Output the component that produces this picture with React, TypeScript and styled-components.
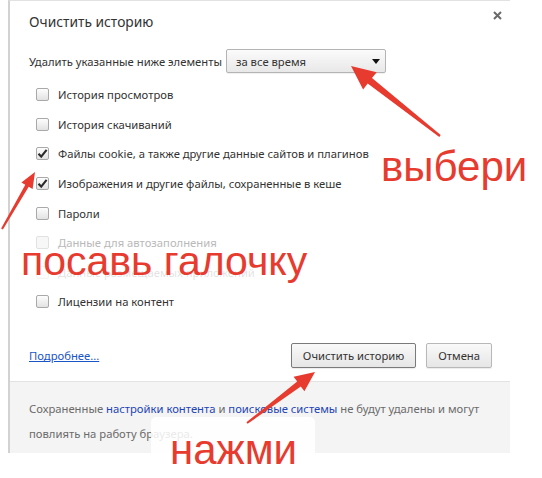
import React from "react";
import styled, { createGlobalStyle, css } from "styled-components";

const Global = createGlobalStyle`
  html, body { margin: 0; padding: 0; background: #ffffff; }
  body { font-family: "Noto Sans", "Open Sans", Arial, sans-serif; }
`;

const Page = styled.div`
  position: relative;
  width: 542px;
  height: 478px;
  overflow: hidden;
  background: #ffffff;
`;

const Dialog = styled.div`
  margin-left: 8px;
  width: 500px;
  border-left: 2px solid #d2d2d2;
  border-top: 1px solid #e2e2e2;
  background: #ffffff;
  font-family: "Noto Sans", "Open Sans", Arial, sans-serif;
  font-size: 11.25px;
  color: #333333;
`;

const Header = styled.div`
  display: flex;
  justify-content: space-between;
  align-items: flex-start;
  padding: 11px 8px 0 19px;
`;

const Title = styled.div`
  font-size: 13.8px;
  line-height: 20px;
  color: #333333;
`;

const Close = styled.div`
  width: 10px;
  height: 10px;
  margin-top: -2px;
  display: flex;
  align-items: center;
  justify-content: center;
`;

const Content = styled.div`
  padding: 0 18px 0 19px;
`;

const PeriodRow = styled.div`
  display: flex;
  align-items: center;
  gap: 4px;
  margin-top: 17px;
  height: 24px;
`;

const Select = styled.div`
  position: relative;
  box-sizing: border-box;
  width: 160px;
  height: 24px;
  padding-left: 9px;
  display: flex;
  align-items: center;
  border: 1px solid #b4b4b4;
  border-radius: 2px;
  background: linear-gradient(#fbfbfb, #e8e8e8);
  box-shadow: 0 1px 0 rgba(0, 0, 0, 0.06);
  color: #333333;
`;

const Caret = styled.span`
  position: absolute;
  right: 5px;
  top: 9px;
  width: 0;
  height: 0;
  border-left: 4px solid transparent;
  border-right: 4px solid transparent;
  border-top: 5px solid #111111;
`;

const List = styled.div`
  margin-top: 7px;
  display: flex;
  flex-direction: column;
`;

const Row = styled.div<{ $disabled?: boolean }>`
  height: 29.6px;
  display: flex;
  align-items: center;
  gap: 9px;
  padding-left: 7px;
  color: ${(p) => (p.$disabled ? "#b9b9b9" : "#333333")};
`;

const Box = styled.span<{ $disabled?: boolean }>`
  box-sizing: border-box;
  width: 13px;
  height: 13px;
  border-radius: 2px;
  display: flex;
  align-items: center;
  justify-content: center;
  ${(p) =>
    p.$disabled
      ? css`
          border: 1px solid #e1e1e1;
          background: #f7f7f7;
        `
      : css`
          border: 1px solid #a9a9a9;
          background: linear-gradient(#fdfdfd, #e2e2e2);
        `}
`;

const Actions = styled.div`
  margin-top: 26px;
  display: flex;
  align-items: center;
  justify-content: space-between;
  height: 25px;
  margin-bottom: 13px;
`;

const MoreLink = styled.a`
  color: #1a55c8;
  text-decoration: underline;
  margin-top: 1px;
`;

const Buttons = styled.div`
  display: flex;
  gap: 10px;
`;

const Button = styled.div<{ $primary?: boolean }>`
  box-sizing: border-box;
  height: 25px;
  padding: 0 11px;
  display: flex;
  align-items: center;
  border-radius: 2px;
  border: 1px solid ${(p) => (p.$primary ? "#7a7a7a" : "#b8b8b8")};
  background: linear-gradient(#f9f9f9, #e6e6e6);
  box-shadow: 0 1px 1px rgba(0, 0, 0, 0.08);
  color: #333333;
`;

const Footer = styled.div`
  border-top: 1px solid #e3e3e3;
  background: #f4f4f4;
  padding: 14px 19px 7px 19px;
  line-height: 25px;
  color: #6b6b6b;
`;

const FooterLink = styled.span`
  color: #2344b4;
`;

const Backdrop = styled.div<{ $x: number; $y: number; $w: number; $h: number }>`
  position: absolute;
  left: ${(p) => p.$x}px;
  top: ${(p) => p.$y}px;
  width: ${(p) => p.$w}px;
  height: ${(p) => p.$h}px;
  background: rgba(255, 255, 255, 0.86);
  border-radius: 5px;
`;

const Note = styled.div<{ $x: number; $y: number; $size: number }>`
  position: absolute;
  left: ${(p) => p.$x}px;
  top: ${(p) => p.$y}px;
  font-family: "Liberation Sans", Arial, sans-serif;
  font-size: ${(p) => p.$size}px;
  line-height: 1;
  color: #e63b2e;
  white-space: nowrap;
`;

const Overlay = styled.svg`
  position: absolute;
  left: 0;
  top: 0;
  pointer-events: none;
`;

const Check = () => (
  <svg width="11" height="11" viewBox="0 0 11 11">
    <path d="M1.5 5.8 L4.2 8.6 L9.6 1.8" fill="none" stroke="#2b2b2b" strokeWidth="2.1" strokeLinejoin="miter" />
  </svg>
);

type ArrowProps = { x1: number; y1: number; x2: number; y2: number; head: number; half: number; w1: number; w2: number };

function arrowPoints({ x1, y1, x2, y2, head, half, w1, w2 }: ArrowProps) {
  const dx = x2 - x1;
  const dy = y2 - y1;
  const len = Math.hypot(dx, dy);
  const ux = dx / len;
  const uy = dy / len;
  const nx = -uy;
  const ny = ux;
  const bx = x2 - ux * head;
  const by = y2 - uy * head;
  const pts: [number, number][] = [
    [x1 + nx * w1, y1 + ny * w1],
    [bx + nx * w2, by + ny * w2],
    [bx + nx * half, by + ny * half],
    [x2, y2],
    [bx - nx * half, by - ny * half],
    [bx - nx * w2, by - ny * w2],
    [x1 - nx * w1, y1 - ny * w1],
  ];
  return pts.map((p) => `${p[0].toFixed(1)},${p[1].toFixed(1)}`).join(" ");
}

const items: { label: string; checked?: boolean; disabled?: boolean }[] = [
  { label: "История просмотров" },
  { label: "История скачиваний" },
  { label: "Файлы cookie, а также другие данные сайтов и плагинов", checked: true },
  { label: "Изображения и другие файлы, сохраненные в кеше", checked: true },
  { label: "Пароли" },
  { label: "Данные для автозаполнения", disabled: true },
  { label: "Данные размещаемых приложений" },
  { label: "Лицензии на контент" },
];

const arrows: ArrowProps[] = [
  { x1: 440, y1: 136, x2: 351, y2: 66, head: 24, half: 11, w1: 1.2, w2: 3.5 },
  { x1: 2, y1: 229, x2: 35, y2: 172, head: 16, half: 6.5, w1: 1, w2: 2 },
  { x1: 247, y1: 423, x2: 315, y2: 372, head: 20, half: 9, w1: 1, w2: 3 },
];

export default function App() {
  return (
    <Page>
      <Global />
      <Dialog>
        <Header>
          <Title>Очистить историю</Title>
          <Close>
            <svg width="9" height="9" viewBox="0 0 9 9">
              <path d="M1 1 L8 8 M8 1 L1 8" stroke="#6a6a6a" strokeWidth="2" />
            </svg>
          </Close>
        </Header>
        <Content>
          <PeriodRow>
            <span>Удалить указанные ниже элементы</span>
            <Select>
              за все время
              <Caret />
            </Select>
          </PeriodRow>
          <List>
            {items.map((it) => (
              <Row key={it.label} $disabled={it.disabled}>
                <Box $disabled={it.disabled}>{it.checked ? <Check /> : null}</Box>
                <span>{it.label}</span>
              </Row>
            ))}
          </List>
          <Actions>
            <MoreLink>Подробнее...</MoreLink>
            <Buttons>
              <Button $primary>Очистить историю</Button>
              <Button>Отмена</Button>
            </Buttons>
          </Actions>
        </Content>
        <Footer>
          Сохраненные <FooterLink>настройки контента</FooterLink> и{" "}
          <FooterLink>поисковые системы</FooterLink> не будут удалены и могут
          <br />
          повлиять на работу браузера.
        </Footer>
      </Dialog>

      <Backdrop $x={370} $y={142} $w={165} $h={58} />
      <Backdrop $x={24} $y={250} $w={286} $h={42} />
      <Backdrop $x={151} $y={417} $w={164} $h={70} />

      <Note $x={381} $y={146} $size={42}>выбери</Note>
      <Note $x={21} $y={241} $size={41}>посавь галочку</Note>
      <Note $x={170} $y={429} $size={42}>нажми</Note>

      <Overlay width={542} height={478} viewBox="0 0 542 478">
        {arrows.map((a, i) => (
          <polygon key={i} points={arrowPoints(a)} fill="#e63b2e" />
        ))}
      </Overlay>
    </Page>
  );
}
